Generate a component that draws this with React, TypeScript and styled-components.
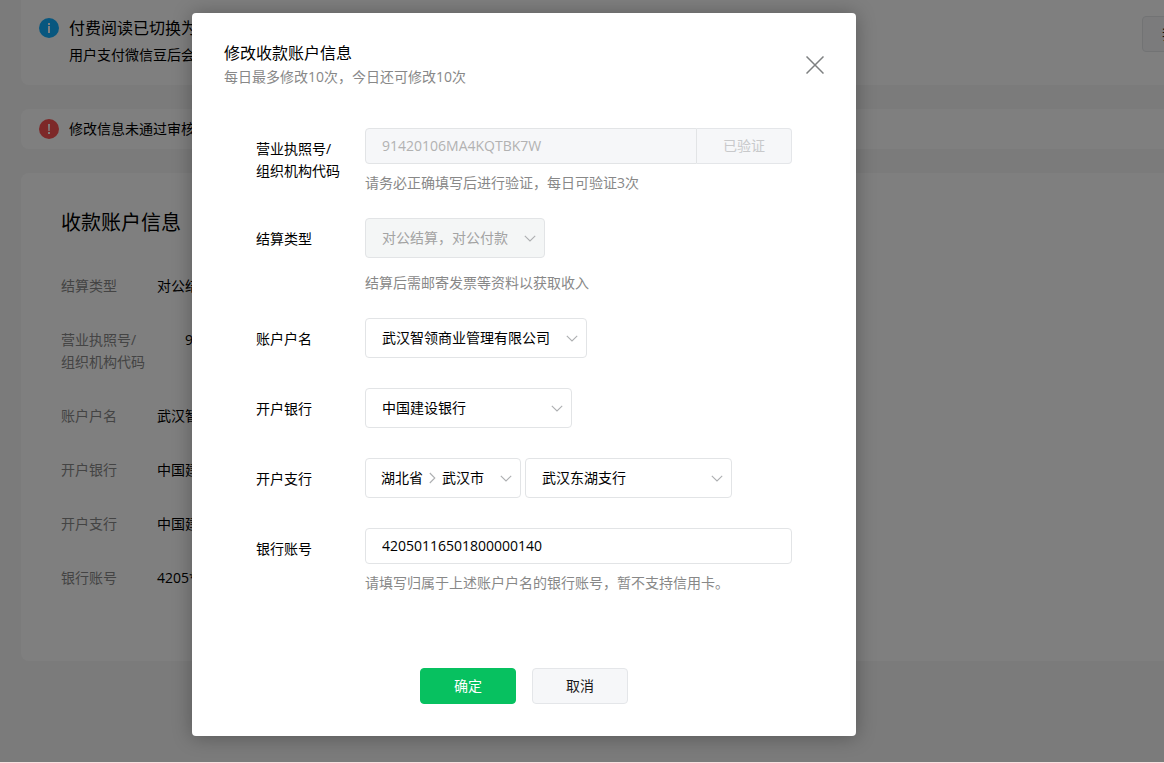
import React from 'react';
import styled, { createGlobalStyle } from 'styled-components';

const GlobalStyle = createGlobalStyle`
  *, *::before, *::after { box-sizing: border-box; }
  html { background: #fbe9ea; }
  body {
    margin: 0;
    color: #000;
    font: 14px/22px "Open Sans", "Noto Sans CJK SC", sans-serif;
  }
  h1, h2, p, dl, dd { margin: 0; font-weight: 400; }
  button, input, select { font: inherit; color: inherit; }
`;

const Shell = styled.div`
  position: relative;
  min-height: 100vh;
  overflow: hidden;
  border-bottom: 1px solid #fbe1e1;
  background: #f7f7f7;
`;

const Page = styled.main`
  display: flex;
  flex-direction: column;
  gap: 24px;
  margin: 0 -95px 0 21px;
`;

const Card = styled.section`
  border-radius: 8px;
  background: #fff;
`;

const Notice = styled(Card)<{ $tall?: boolean }>`
  display: flex;
  align-items: flex-start;
  gap: 10px;
  padding: ${p => (p.$tall ? '14px 21px 17px 18px' : '9px 21px 9px 18px')};
  ${p => p.$tall && 'border-top-left-radius: 0;'}
`;

const NoticeIcon = styled.svg<{ $drop?: boolean }>`
  flex: none;
  width: 20px;
  height: 20px;
  margin: ${p => (p.$drop ? '4px 0' : '1px 0')};
`;

const NoticeBody = styled.div`
  flex: 1;
`;

const NoticeTitle = styled.p`
  font-size: 16px;
  line-height: 28px;
`;

const NoticeText = styled.p<{ $line?: number }>`
  line-height: ${p => p.$line ?? 22}px;
`;

const Button = styled.button<{ $primary?: boolean }>`
  width: 96px;
  height: 36px;
  padding: 0;
  border: 1px solid ${p => (p.$primary ? '#07c160' : '#e4e6e9')};
  border-radius: 4px;
  background: ${p => (p.$primary ? '#07c160' : '#f6f7f9')};
  color: ${p => (p.$primary ? '#fff' : '#1a1a1a')};
`;

const NoticeButton = styled(Button)`
  margin-top: 2px;
`;

const Account = styled(Card)`
  padding: 36px 40px 72px;
`;

const AccountTitle = styled.h2`
  margin-bottom: 38px;
  font-size: 20px;
  line-height: 28px;
`;

const Details = styled.dl`
  display: grid;
  gap: 32px;
`;

const Detail = styled.div`
  display: flex;
`;

const Term = styled.dt<{ $wide?: boolean }>`
  width: ${p => (p.$wide ? 124 : 96)}px;
  color: #888;
  white-space: pre-line;
`;

const Overlay = styled.div`
  position: absolute;
  inset: 0;
  display: flex;
  justify-content: center;
  align-items: flex-start;
  padding: 13px 116px 0 0;
  background: rgba(0, 0, 0, 0.5);
`;

const Dialog = styled.div`
  width: 664px;
  padding-bottom: 32px;
  border-radius: 4px;
  background: #fff;
  box-shadow: 0 1px 20px rgba(0, 0, 0, 0.3);
`;

const DialogHeader = styled.header`
  display: flex;
  justify-content: space-between;
  align-items: center;
  padding: 28px 32px 0;
`;

const DialogTitle = styled.h1`
  font-size: 16px;
  line-height: 24px;
`;

const DialogNote = styled.p`
  line-height: 24px;
  color: #888;
`;

const CloseButton = styled.button`
  display: flex;
  padding: 0;
  border: 0;
  background: none;
  color: #7e8081;
`;

const Form = styled.form`
  display: flex;
  flex-direction: column;
  gap: 24px;
  padding: 39px 64px 0;
`;

const Row = styled.div`
  display: flex;
  min-height: 46px;
`;

const Label = styled.label`
  flex: none;
  width: 109px;
  padding-top: 10px;
  white-space: pre-line;
`;

const Field = styled.div`
  flex: 1;
`;

const Hint = styled.p`
  margin-top: 8px;
  color: #888;
`;

const Controls = styled.div`
  display: flex;
  gap: 4px;
  padding-bottom: 6px;
`;

const InputGroup = styled.div`
  display: flex;
`;

const TextInput = styled.input<{ $joined?: boolean }>`
  flex: 1;
  min-width: 0;
  height: 36px;
  padding: 0 16px 2px;
  border: 1px solid #e2e4e6;
  border-radius: ${p => (p.$joined ? '4px 0 0 4px' : '4px')};
  background: #fff;
  outline: none;

  &:disabled {
    background: #f6f7f9;
    color: #b2b2b2;
  }
`;

const VerifyButton = styled(Button)`
  width: 95px;
  border-left: 0;
  border-radius: 0 4px 4px 0;
  color: #c8c9cb;
`;

const SelectBox = styled.div<{ $width: number }>`
  position: relative;
  width: ${p => p.$width}px;
`;

const Select = styled.select`
  appearance: none;
  display: block;
  width: 100%;
  height: 40px;
  padding: 0 30px 0 16px;
  border: 1px solid #e2e4e6;
  border-radius: 4px;
  background: #fff;
  outline: none;

  &:disabled {
    background: #f4f6f6;
    color: #a3a3a3;
    opacity: 1;
  }
`;

const SelectArrow = styled.svg`
  position: absolute;
  top: 17px;
  right: 9px;
  pointer-events: none;
`;

const RegionButton = styled.button`
  display: flex;
  align-items: center;
  gap: 6px;
  width: 156px;
  height: 40px;
  padding: 0 8px 0 15px;
  border: 1px solid #e2e4e6;
  border-radius: 4px;
  background: #fff;

  svg:last-child { margin-left: auto; }
`;

const Footer = styled.footer`
  display: flex;
  justify-content: center;
  gap: 16px;
  margin-top: 74px;
`;

const arrowStroke = { fill: 'none', stroke: '#adafb1', strokeWidth: 1.1 };

const DownArrow = () => <path d="M.8 .8 6 6 11.2 .8" {...arrowStroke} />;

function Dropdown(props: { id?: string; label?: string; width: number; value: string; disabled?: boolean }) {
  return (
    <SelectBox $width={props.width}>
      <Select id={props.id} aria-label={props.label} disabled={props.disabled} defaultValue={props.value}>
        <option>{props.value}</option>
      </Select>
      <SelectArrow width="12" height="7" viewBox="0 0 12 7" aria-hidden="true">
        <DownArrow />
      </SelectArrow>
    </SelectBox>
  );
}

const details = [
  { term: '结算类型', value: '对公结算' },
  { term: '营业执照号/\n组织机构代码', value: '91420106', wide: true },
  { term: '账户户名', value: '武汉智领' },
  { term: '开户银行', value: '中国建设银行' },
  { term: '开户支行', value: '中国建设银行' },
  { term: '银行账号', value: '4205************0140' },
];

export default function App() {
  return (
    <Shell>
      <GlobalStyle />
      <Page>
        <Notice $tall>
          <NoticeIcon $drop viewBox="0 0 20 20" aria-hidden="true">
            <circle cx="10" cy="10" r="10" fill="#10aeff" />
            <path d="M9 5h2v2H9zM9 8h2v7H9z" fill="#fff" />
          </NoticeIcon>
          <NoticeBody>
            <NoticeTitle>付费阅读已切换为微信豆</NoticeTitle>
            <NoticeText $line={26}>用户支付微信豆后会</NoticeText>
          </NoticeBody>
          <NoticeButton type="button">我知道了</NoticeButton>
        </Notice>

        <Notice>
          <NoticeIcon viewBox="0 0 20 20" aria-hidden="true">
            <circle cx="10" cy="10" r="10" fill="#fa5151" />
            <path d="M9 5h2l-.3 7H9.300zM9 13h2v2H9z" fill="#fff" />
          </NoticeIcon>
          <NoticeText>修改信息未通过审核</NoticeText>
        </Notice>

        <Account>
          <AccountTitle>收款账户信息</AccountTitle>
          <Details>
            {details.map(d => (
              <Detail key={d.term}>
                <Term $wide={d.wide}>{d.term}</Term>
                <dd>{d.value}</dd>
              </Detail>
            ))}
          </Details>
        </Account>
      </Page>

      <Overlay>
        <Dialog role="dialog" aria-modal="true" aria-labelledby="dialog-title">
          <DialogHeader>
            <div>
              <DialogTitle id="dialog-title">修改收款账户信息</DialogTitle>
              <DialogNote>每日最多修改10次，今日还可修改10次</DialogNote>
            </div>
            <CloseButton type="button" aria-label="关闭">
              <svg width="18" height="18" viewBox="0 0 18 18" aria-hidden="true">
                <path d="M.5.5l17 17M17.500.5l-17 17" stroke="currentColor" strokeWidth="1.5" />
              </svg>
            </CloseButton>
          </DialogHeader>

          <Form id="account-form">
            <Row>
              <Label htmlFor="license">{'营业执照号/\n组织机构代码'}</Label>
              <Field>
                <InputGroup>
                  <TextInput id="license" $joined disabled defaultValue="91420106MA4KQTBK7W" />
                  <VerifyButton type="button" disabled>已验证</VerifyButton>
                </InputGroup>
                <Hint>请务必正确填写后进行验证，每日可验证3次</Hint>
              </Field>
            </Row>
            <Row>
              <Label htmlFor="settlement">结算类型</Label>
              <Field>
                <Controls>
                  <Dropdown id="settlement" width={180} value="对公结算，对公付款" disabled />
                </Controls>
                <Hint>结算后需邮寄发票等资料以获取收入</Hint>
              </Field>
            </Row>
            <Row>
              <Label htmlFor="holder">账户户名</Label>
              <Controls>
                <Dropdown id="holder" width={222} value="武汉智领商业管理有限公司" />
              </Controls>
            </Row>
            <Row>
              <Label htmlFor="bank">开户银行</Label>
              <Controls>
                <Dropdown id="bank" width={207} value="中国建设银行" />
              </Controls>
            </Row>
            <Row>
              <Label htmlFor="region">开户支行</Label>
              <Controls>
                <RegionButton id="region" type="button" aria-haspopup="listbox">
                  <span>湖北省</span>
                  <svg width="7" height="12" viewBox="0 0 7 12" aria-hidden="true">
                    <path d="M.8 1 5.800 6 .8 11" {...arrowStroke} />
                  </svg>
                  <span>武汉市</span>
                  <svg width="12" height="7" viewBox="0 0 12 7" aria-hidden="true">
                    <DownArrow />
                  </svg>
                </RegionButton>
                <Dropdown label="支行名称" width={207} value="武汉东湖支行" />
              </Controls>
            </Row>
            <Row>
              <Label htmlFor="number">银行账号</Label>
              <Field>
                <InputGroup>
                  <TextInput id="number" defaultValue="42050116501800000140" />
                </InputGroup>
                <Hint>请填写归属于上述账户户名的银行账号，暂不支持信用卡。</Hint>
              </Field>
            </Row>
          </Form>

          <Footer>
            <Button type="submit" form="account-form" $primary>确定</Button>
            <Button type="button">取消</Button>
          </Footer>
        </Dialog>
      </Overlay>
    </Shell>
  );
}
